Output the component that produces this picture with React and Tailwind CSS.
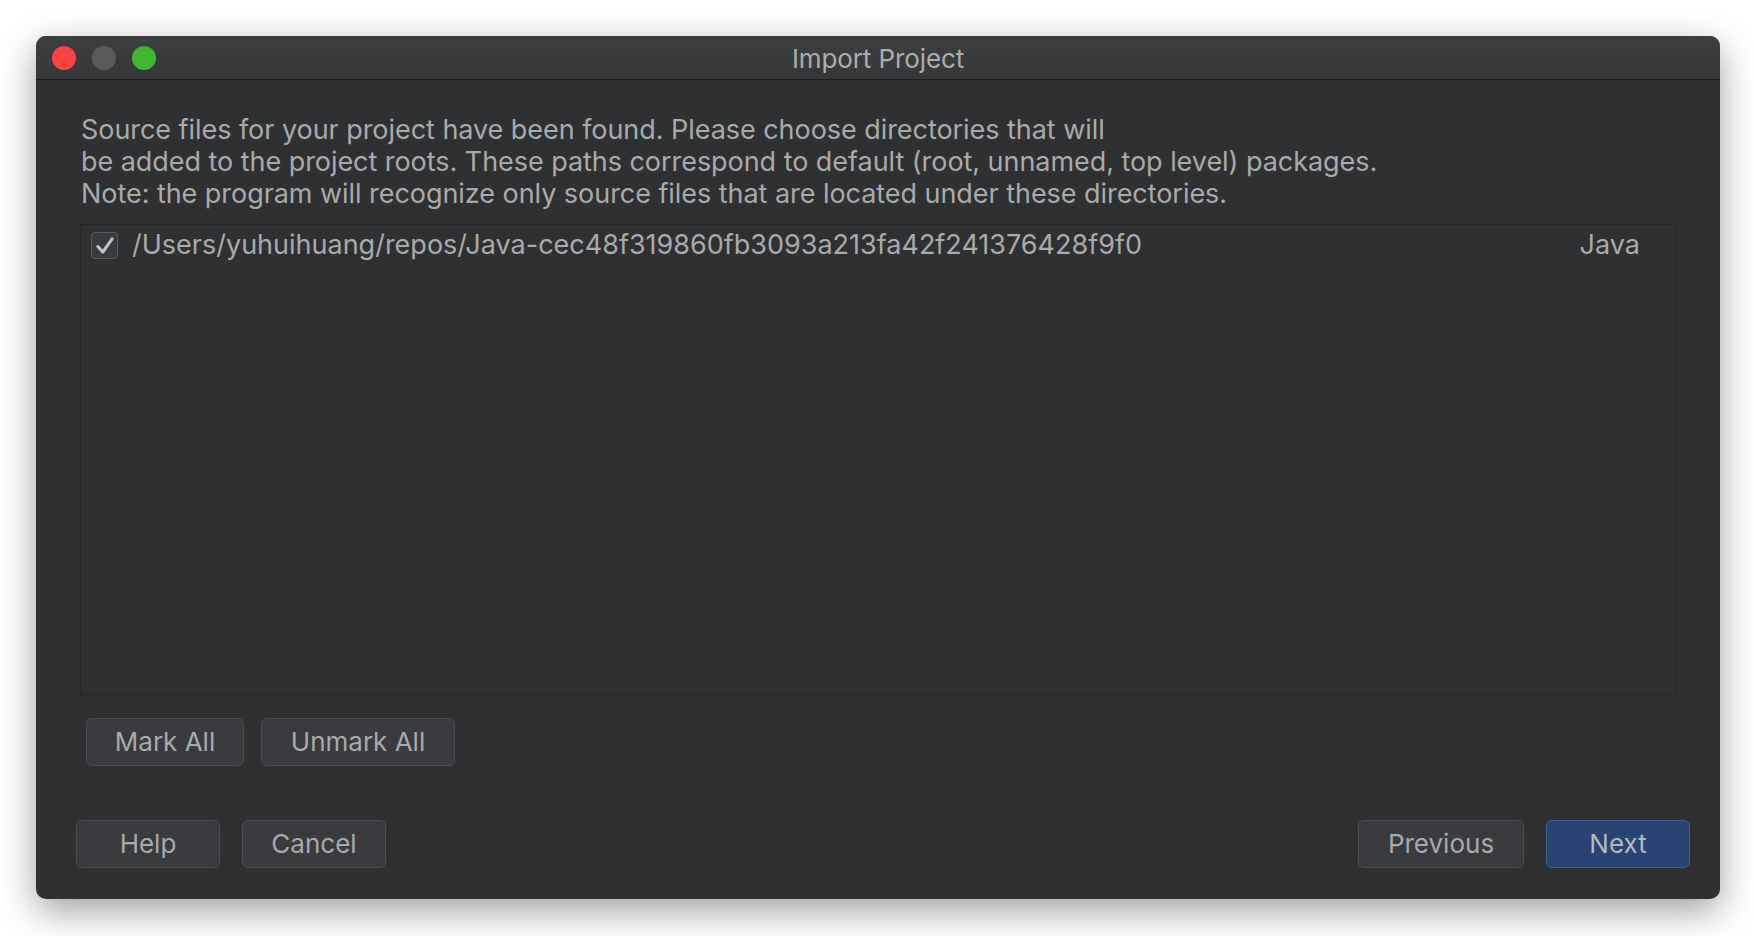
import React, { useState } from 'react';

const Btn = ({ children, primary, className = '' }) => (
  <button
    className={`h-[48px] rounded-[6px] border text-[26px] leading-none ${
      primary
        ? 'bg-[#284472] border-[#3a5f92] text-[#b4b8bf]'
        : 'bg-[#393b3e] border-[#4b4d50] text-[#a9aaab]'
    } ${className}`}
  >
    {children}
  </button>
);

const App = () => {
  const [checked, setChecked] = useState(true);

  return (
    <div className="w-[1756px] h-[936px] bg-white pt-[36px] pl-[36px]" style={{ fontFamily: 'Inter, "Noto Sans", sans-serif' }}>
      <div className="w-[1684px] h-[863px] rounded-[10px] overflow-hidden flex flex-col bg-[#2f3032] shadow-[0_12px_36px_rgba(0,0,0,0.38)]">
        {/* title bar */}
        <div className="relative h-[43px] flex items-center justify-center bg-gradient-to-b from-[#3d3e3f] to-[#363738] border-b border-[#1c1c1c] box-content">
          <div className="absolute left-[16px] top-[10px] flex gap-[16px]">
            <span className="w-[24px] h-[24px] rounded-full bg-[#fd4242]"></span>
            <span className="w-[24px] h-[24px] rounded-full bg-[#5a5a5b]"></span>
            <span className="w-[24px] h-[24px] rounded-full bg-[#40b82c]"></span>
          </div>
          <span className="pt-[2px] text-[26px] text-[#adadad] tracking-[-0.1px]">Import Project</span>
        </div>

        {/* body */}
        <div className="flex-1 flex flex-col px-[44px] pt-[34px] pb-[31px]">
          <p className="text-[27px] leading-[32px] tracking-[-0.05px] text-[#a9aaab] pl-[1px]">
            Source files for your project have been found. Please choose directories that will
            <br />
            be added to the project roots. These paths correspond to default (root, unnamed, top level) packages.
            <br />
            Note: the program will recognize only source files that are located under these directories.
          </p>

          <div className="mt-[14px] h-[471px] border border-[#262728] bg-[#2f3032]">
            <div className="flex items-center h-[41px] pl-[10px] pr-[35px]">
              <button
                onClick={() => setChecked(!checked)}
                className="w-[27px] h-[27px] rounded-[4px] border-[1.5px] border-[#5a5d60] bg-[#383b3d] flex items-center justify-center"
              >
                {checked && (
                  <svg width="22" height="22" viewBox="0 0 20 20">
                    <path d="M3.5 10.5 L8 15.5 L16.5 3.5" fill="none" stroke="#c2c2c2" strokeWidth="2.8" strokeLinecap="round" strokeLinejoin="round" />
                  </svg>
                )}
              </button>
              <span className="ml-[14px] text-[27px] text-[#a9aaab]">/Users/yuhuihuang/repos/Java-cec48f319860fb3093a213fa42f241376428f9f0</span>
              <span className="ml-auto text-[27px] text-[#a9aaab]">Java</span>
            </div>
          </div>

          <div className="mt-[23px] pl-[6px] flex gap-[17px]">
            <Btn className="w-[158px]">Mark All</Btn>
            <Btn className="w-[194px]">Unmark All</Btn>
          </div>

          <div className="mt-auto flex items-center -ml-[4px] -mr-[14px]">
            <div className="flex gap-[22px]">
              <Btn className="w-[144px]">Help</Btn>
              <Btn className="w-[144px]">Cancel</Btn>
            </div>
            <div className="ml-auto flex gap-[22px]">
              <Btn className="w-[166px]">Previous</Btn>
              <Btn primary className="w-[144px]">Next</Btn>
            </div>
          </div>
        </div>
      </div>
    </div>
  );
};

export default App;
